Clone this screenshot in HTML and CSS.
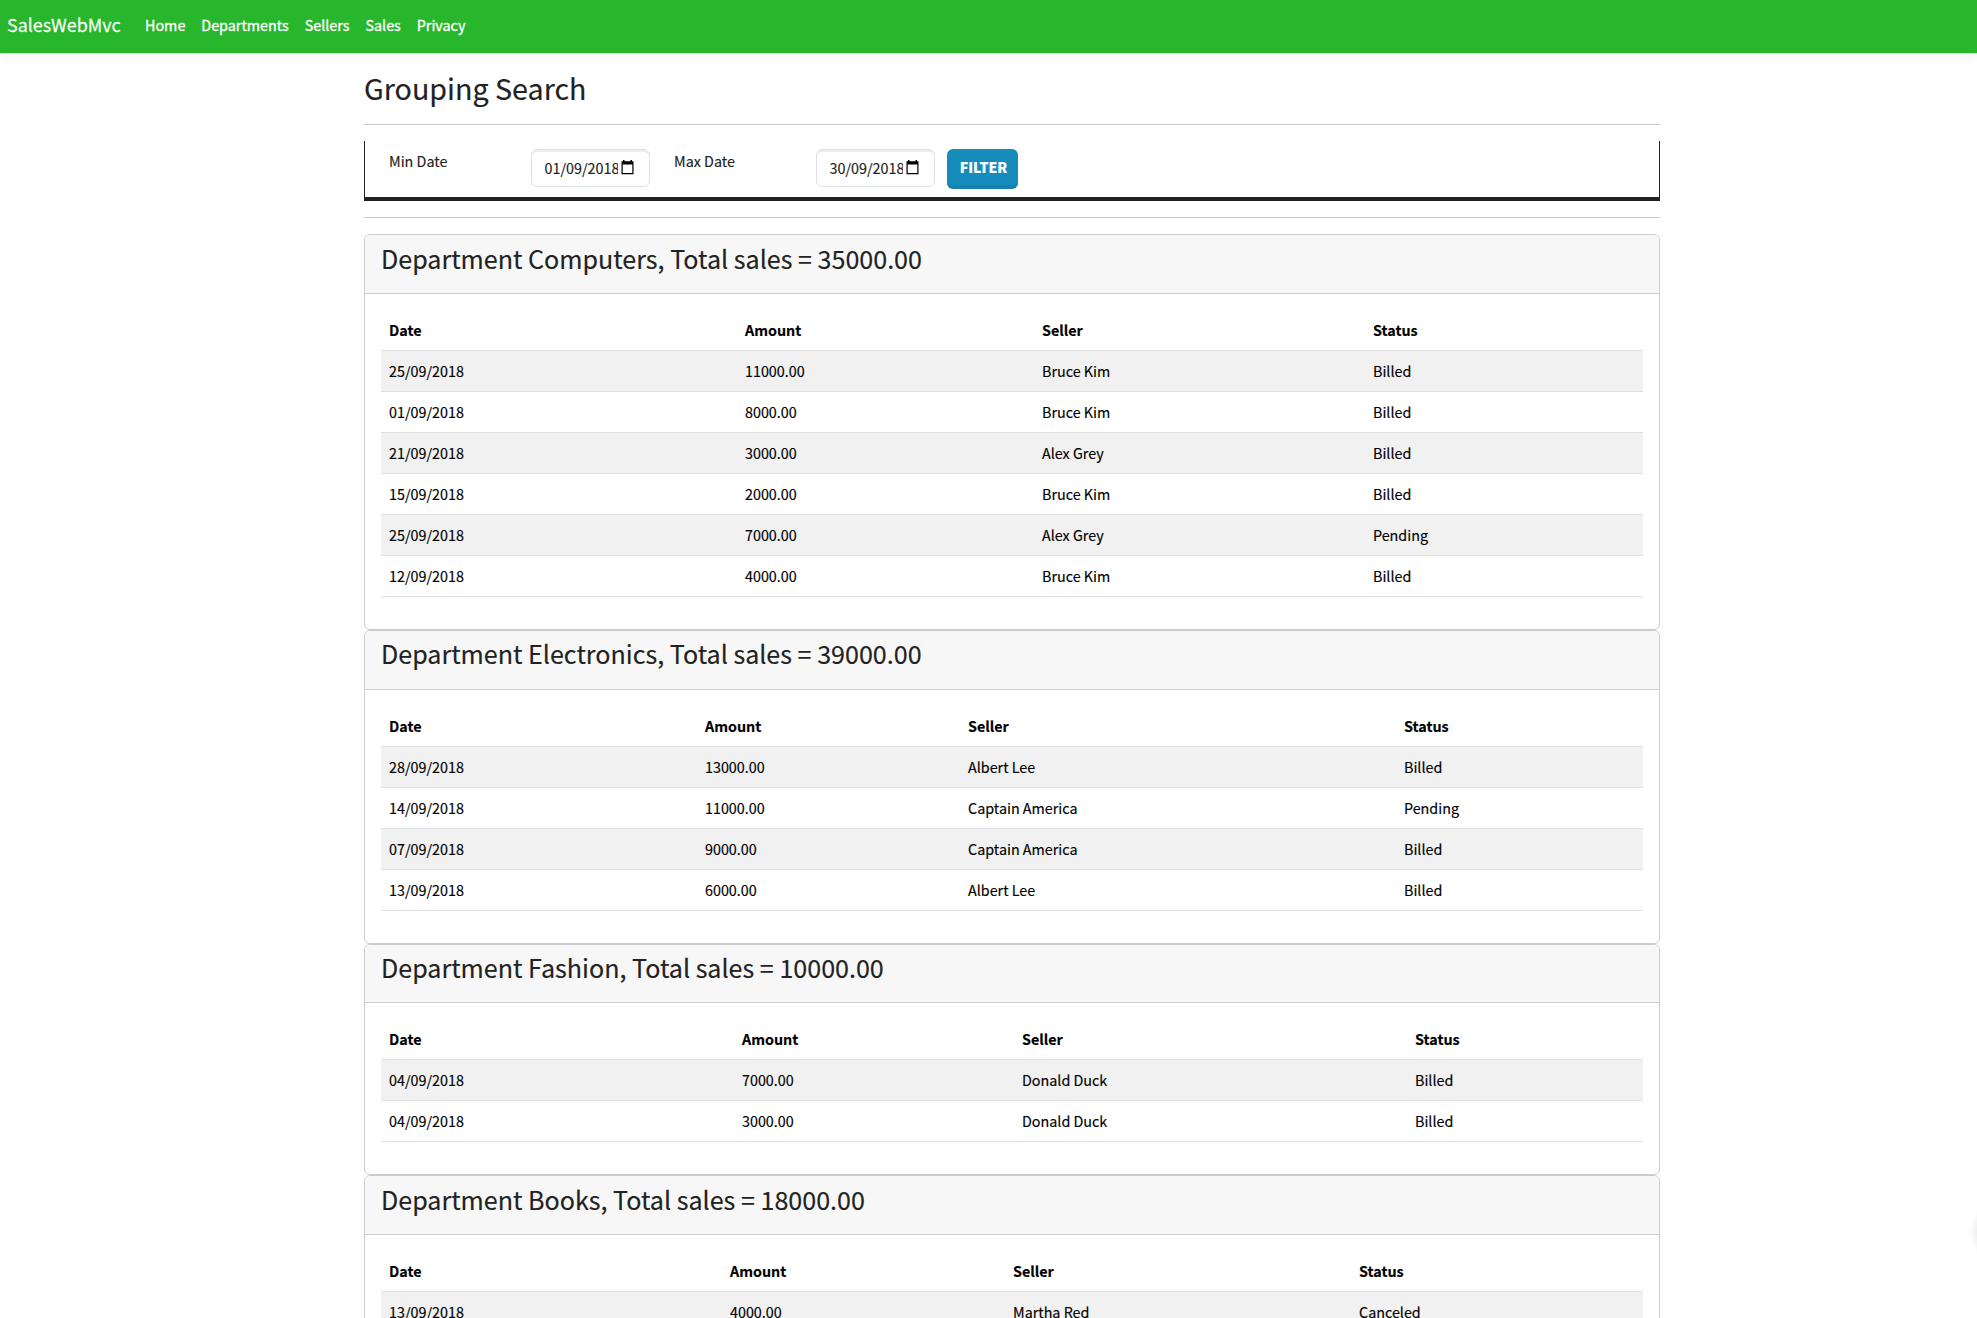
FILE: index.html
```html
<!DOCTYPE html>
<html lang="en">
<head>
<meta charset="utf-8">
<title>Grouping Search - SalesWebMvc</title>
<link rel="stylesheet" href="styles.css">
</head>
<body>
<header class="navbar">
  <a class="brand">SalesWebMvc</a>
  <nav class="links"><a>Home</a><a>Departments</a><a>Sellers</a><a>Sales</a><a>Privacy</a></nav>
</header>
<main class="container">
  <h2 class="title">Grouping Search</h2>
  <hr class="rule">
  <form class="filter">
    <label class="label">Min Date</label>
    <div class="date"><span class="value">01/09/2018</span><svg class="cal" viewBox="0 0 13 15"><path fill="#000" fill-rule="evenodd" d="M.5 1.200h1.500V0h1.500v1.200h6V0H11v1.200h1.500v13H.5zM1.700 4.500V13h9.600V4.500z"/></svg></div>
    <label class="label">Max Date</label>
    <div class="date"><span class="value">30/09/2018</span><svg class="cal" viewBox="0 0 13 15"><path fill="#000" fill-rule="evenodd" d="M.5 1.200h1.500V0h1.500v1.200h6V0H11v1.200h1.500v13H.5zM1.700 4.500V13h9.600V4.500z"/></svg></div>
    <button class="button" type="button">FILTER</button>
  </form>
  <hr class="rule">
  <section class="card first">
    <h3 class="card-header">Department Computers, Total sales = 35000.00</h3>
    <table class="table computers">
      <colgroup><col class="c1"><col class="c2"><col class="c3"><col></colgroup>
      <thead><tr><th>Date</th><th>Amount</th><th>Seller</th><th>Status</th></tr></thead>
      <tbody>
        <tr><td>25/09/2018</td><td>11000.00</td><td>Bruce Kim</td><td>Billed</td></tr>
        <tr><td>01/09/2018</td><td>8000.00</td><td>Bruce Kim</td><td>Billed</td></tr>
        <tr><td>21/09/2018</td><td>3000.00</td><td>Alex Grey</td><td>Billed</td></tr>
        <tr><td>15/09/2018</td><td>2000.00</td><td>Bruce Kim</td><td>Billed</td></tr>
        <tr><td>25/09/2018</td><td>7000.00</td><td>Alex Grey</td><td>Pending</td></tr>
        <tr><td>12/09/2018</td><td>4000.00</td><td>Bruce Kim</td><td>Billed</td></tr>
      </tbody>
    </table>
  </section>
  <section class="card">
    <h3 class="card-header">Department Electronics, Total sales = 39000.00</h3>
    <table class="table electronics">
      <colgroup><col class="c1"><col class="c2"><col class="c3"><col></colgroup>
      <thead><tr><th>Date</th><th>Amount</th><th>Seller</th><th>Status</th></tr></thead>
      <tbody>
        <tr><td>28/09/2018</td><td>13000.00</td><td>Albert Lee</td><td>Billed</td></tr>
        <tr><td>14/09/2018</td><td>11000.00</td><td>Captain America</td><td>Pending</td></tr>
        <tr><td>07/09/2018</td><td>9000.00</td><td>Captain America</td><td>Billed</td></tr>
        <tr><td>13/09/2018</td><td>6000.00</td><td>Albert Lee</td><td>Billed</td></tr>
      </tbody>
    </table>
  </section>
  <section class="card">
    <h3 class="card-header">Department Fashion, Total sales = 10000.00</h3>
    <table class="table fashion">
      <colgroup><col class="c1"><col class="c2"><col class="c3"><col></colgroup>
      <thead><tr><th>Date</th><th>Amount</th><th>Seller</th><th>Status</th></tr></thead>
      <tbody>
        <tr><td>04/09/2018</td><td>7000.00</td><td>Donald Duck</td><td>Billed</td></tr>
        <tr><td>04/09/2018</td><td>3000.00</td><td>Donald Duck</td><td>Billed</td></tr>
      </tbody>
    </table>
  </section>
  <section class="card">
    <h3 class="card-header">Department Books, Total sales = 18000.00</h3>
    <table class="table books">
      <colgroup><col class="c1"><col class="c2"><col class="c3"><col></colgroup>
      <thead><tr><th>Date</th><th>Amount</th><th>Seller</th><th>Status</th></tr></thead>
      <tbody>
        <tr><td>13/09/2018</td><td>4000.00</td><td>Martha Red</td><td>Canceled</td></tr>
      </tbody>
    </table>
  </section>
</main>
<div class="side-widget"></div>
</body>
</html>
```
FILE: styles.css
```css
* { box-sizing: border-box; }
body {
  margin: 0;
  height: 1318px;
  overflow: hidden;
  background: #fff;
  color: #222;
  font: 14.33px/24px "Noto Sans CJK SC", "Open Sans", sans-serif;
  -webkit-text-stroke: .15px currentColor;
}
.navbar {
  display: flex;
  align-items: center;
  height: 54px;
  padding: 0 0 4px 7px;
  background: #28b62c;
  border-bottom: 1px solid #dee2e6;
  box-shadow: 0 4px 12px rgba(0, 0, 0, .05);
  color: #fff;
  -webkit-text-stroke: .3px currentColor;
}
.brand { width: 138px; padding-bottom: 1px; font-size: 17.9px; color: rgba(255, 255, 255, .95); }
.links { display: flex; gap: 16px; }
.container { width: 1296px; margin-left: 364px; }
.title { margin: 15px 0 17px; font-size: 28.66px; font-weight: 400; line-height: 38.4px; }
.rule { height: 0; margin: 0; border: 0; border-top: 1px solid #c8c8c8; }
.filter {
  display: flex;
  height: 60px;
  margin: 16px 0;
  padding: 8px 24px;
  border: solid #222;
  border-width: 0 1px 4px;
}
.label { width: 142px; }
.date {
  display: flex;
  align-items: center;
  width: 119px;
  height: 38px;
  margin-right: 24px;
  padding: 0 13px;
  border: 1px solid #dee2e6;
  border-radius: 6px;
  box-shadow: inset 0 2px 0 rgba(0, 0, 0, .075);
}
.value { width: 73px; margin-left: -.5px; overflow: hidden; white-space: nowrap; }
.cal { flex: none; width: 13px; height: 15px; margin: 0 0 2px 3px; }
.button {
  width: 71px;
  height: 40px;
  margin-left: -12px;
  padding: 0 0 0 2px;
  border: solid #1681ab;
  border-width: 0 0 4px;
  border-radius: 6px;
  background: #158cba;
  color: #fff;
  font: 900 14px/24px "Noto Sans CJK SC", "Open Sans", sans-serif;
}
.card { border: 1px solid #ccc; border-radius: 6px; padding-bottom: 16px; }
.card.first { margin-top: 16px; }
.card-header {
  height: 58.6px;
  margin: 0;
  padding: 6.400px 16px 0;
  border-bottom: 1px solid #ccc;
  border-radius: 5px 5px 0 0;
  background: #f7f7f7;
  font-size: 25.08px;
  font-weight: 400;
  line-height: 33.6px;
}
.table {
  width: 1262px;
  margin: 16px;
  table-layout: fixed;
  border-collapse: separate;
  border-spacing: 0;
  color: #000;
}
.table th, .table td { height: 41px; padding: 8px; border-bottom: 1px solid #dee2e6; text-align: left; }
.table tbody tr:nth-child(odd) { background: #f1f1f1; }
.computers .c1 { width: 356px; }
.computers .c2 { width: 297px; }
.computers .c3 { width: 331px; }
.electronics .c1 { width: 316px; }
.electronics .c2 { width: 263px; }
.electronics .c3 { width: 436px; }
.fashion .c1 { width: 353px; }
.fashion .c2 { width: 280px; }
.fashion .c3 { width: 393px; }
.books .c1 { width: 341px; }
.books .c2 { width: 283px; }
.books .c3 { width: 346px; }
.side-widget {
  position: absolute;
  top: 1207px;
  left: 1978px;
  width: 50px;
  height: 50px;
  border-radius: 50%;
  box-shadow: 0 0 12px rgba(0, 0, 0, .16);
}
```
